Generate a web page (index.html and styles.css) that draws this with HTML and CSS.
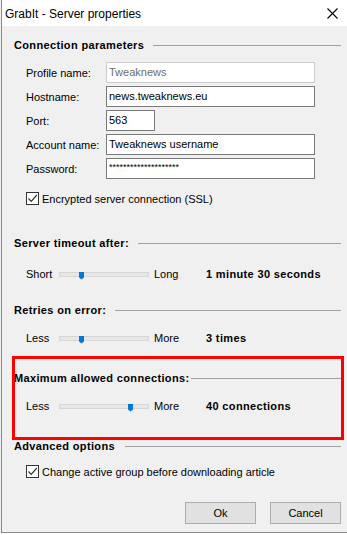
FILE: index.html
```html
<!DOCTYPE html>
<html lang="en">
<head>
    <meta charset="UTF-8">
    <title>GrabIt - Server properties</title>
    <link rel="stylesheet" href="styles.css">
</head>
<body>
    <div class="dialog">
        <div class="titlebar">
            <span class="title">GrabIt - Server properties</span>
            <svg class="close" width="11" height="11" viewBox="0 0 11 11">
                <path d="M0.5 0.5 L10.5 10.5 M10.5 0.5 L0.5 10.5" stroke="#000" stroke-width="1.1" fill="none"/>
            </svg>
        </div>

        <div class="content">
            <div class="group-header first"><span>Connection parameters</span><div class="rule"></div></div>

            <div class="fields">
                <div class="field">
                    <label>Profile name:</label>
                    <div class="input disabled">Tweaknews</div>
                </div>
                <div class="field">
                    <label>Hostname:</label>
                    <div class="input">news.tweaknews.eu</div>
                </div>
                <div class="field">
                    <label>Port:</label>
                    <div class="input port">563</div>
                </div>
                <div class="field">
                    <label>Account name:</label>
                    <div class="input">Tweaknews username</div>
                </div>
                <div class="field">
                    <label>Password:</label>
                    <div class="input password">********************</div>
                </div>
            </div>

            <div class="check ssl">
                <span class="box"><svg width="11" height="11" viewBox="0 0 11 11"><path d="M1.5 5.5 L4.2 8.3 L9.8 2" stroke="#333" stroke-width="1.2" fill="none"/></svg></span>
                <span>Encrypted server connection (SSL)</span>
            </div>

            <div class="group-header timeout"><span>Server timeout after:</span><div class="rule"></div></div>
            <div class="slider-row">
                <span class="low">Short</span>
                <div class="track"><div class="thumb" style="left: 19px"></div></div>
                <span class="high">Long</span>
                <span class="value">1 minute 30 seconds</span>
            </div>

            <div class="group-header retries"><span>Retries on error:</span><div class="rule"></div></div>
            <div class="slider-row">
                <span class="low">Less</span>
                <div class="track"><div class="thumb" style="left: 19px"></div></div>
                <span class="high">More</span>
                <span class="value">3 times</span>
            </div>

            <div class="highlighted">
                <div class="group-header connections"><span>Maximum allowed connections:</span><div class="rule"></div></div>
                <div class="slider-row">
                    <span class="low">Less</span>
                    <div class="track"><div class="thumb" style="left: 68px"></div></div>
                    <span class="high">More</span>
                    <span class="value">40 connections</span>
                </div>
                <div class="marker"></div>
            </div>

            <div class="group-header advanced"><span>Advanced options</span><div class="rule"></div></div>
            <div class="check group">
                <span class="box"><svg width="11" height="11" viewBox="0 0 11 11"><path d="M1.5 5.5 L4.2 8.3 L9.8 2" stroke="#333" stroke-width="1.2" fill="none"/></svg></span>
                <span>Change active group before downloading article</span>
            </div>

            <div class="buttons">
                <button class="ok">Ok</button>
                <button>Cancel</button>
            </div>
        </div>
    </div>
    <div class="behind"></div>
</body>
</html>
```

FILE: styles.css
```css
* {
    margin: 0;
    padding: 0;
    box-sizing: border-box;
}

body {
    font-family: 'Liberation Sans', Arial, sans-serif;
    font-size: 11px;
    color: #000;
    background-color: #f0f0f0;
    width: 347px;
    height: 535px;
    overflow: hidden;
}

.dialog {
    margin-left: 1px;
    height: 533px;
    border-left: 1px solid #8a8a8a;
    border-bottom: 1px solid #8a8a8a;
    background-color: #f0f0f0;
    display: flex;
    flex-direction: column;
}

.titlebar {
    height: 26px;
    background-color: #fff;
    display: flex;
    align-items: center;
    justify-content: space-between;
    padding: 0 9px 0 3px;
}

.title {
    font-size: 12px;
    padding-top: 1px;
}

.close {
    display: block;
}

.content {
    position: relative;
    padding: 0 6px 0 12px;
    flex: 1;
}

.group-header {
    display: flex;
    align-items: center;
    height: 14px;
    font-weight: bold;
}

.group-header span {
    white-space: nowrap;
    letter-spacing: 0.35px;
}

.rule {
    flex: 1;
    border-top: 1px solid #a0a0a0;
    margin-left: 9px;
}

.group-header.first { margin-top: 12px; }
.group-header.timeout { margin-top: 31px; }
.group-header.retries { margin-top: 21px; }
.group-header.connections { margin-top: 25px; }
.group-header.advanced { margin-top: 25px; }

.connections .rule { margin-left: 2px; }
.advanced .rule { margin-left: 10px; }

.fields {
    margin-top: 10px;
    padding-left: 12px;
    display: flex;
    flex-direction: column;
    gap: 3px;
}

.field {
    display: flex;
    align-items: center;
    height: 21px;
}

.field label {
    width: 80px;
}

.input {
    width: 209px;
    height: 21px;
    border: 1px solid #7a7a7a;
    background-color: #fff;
    padding: 3px 0 0 2px;
    white-space: nowrap;
    overflow: hidden;
}

.input.disabled {
    border-color: #cccccc;
    color: #6d6d6d;
}

.input.port {
    width: 49px;
}

.input.password {
    font-size: 9px;
    padding-top: 3px;
}

.check {
    display: flex;
    align-items: center;
    padding-left: 12px;
    height: 13px;
}

.check .box {
    width: 13px;
    height: 13px;
    border: 1px solid #333;
    background-color: #fff;
    display: flex;
    align-items: center;
    justify-content: center;
    margin-right: 3px;
}

.check .box svg {
    display: block;
}

.check.ssl { margin-top: 13px; }
.check.group { margin-top: 12px; }

.slider-row {
    display: flex;
    align-items: center;
    height: 16px;
    margin-top: 16px;
    padding-left: 12px;
}

.retries + .slider-row { margin-top: 13px; }
.connections + .slider-row { margin-top: 13px; }

.low {
    width: 33px;
}

.track {
    position: relative;
    width: 90px;
    height: 5px;
    background-color: #e7e7e7;
    border: 1px solid #d6d6d6;
    margin-right: 5px;
}

.thumb {
    position: absolute;
    top: -1px;
    width: 5px;
    height: 8px;
    background-color: #0078d7;
    clip-path: polygon(0 0, 100% 0, 100% 75%, 50% 100%, 0 75%);
}

.high {
    width: 52px;
}

.value {
    font-weight: bold;
    letter-spacing: 0.35px;
}

.highlighted {
    position: relative;
}

.marker {
    position: absolute;
    left: -2px;
    right: -3px;
    top: -15px;
    height: 84px;
    border: 3px solid #ff0000;
}

.buttons {
    display: flex;
    justify-content: flex-end;
    gap: 14px;
    margin-top: 24px;
}

.buttons button {
    width: 71px;
    height: 22px;
    font-family: 'Liberation Sans', Arial, sans-serif;
    font-size: 11px;
    background-color: #e1e1e1;
    border: 1px solid #adadad;
    color: #000;
}

.behind {
    height: 2px;
    background-color: #fff;
}
```
